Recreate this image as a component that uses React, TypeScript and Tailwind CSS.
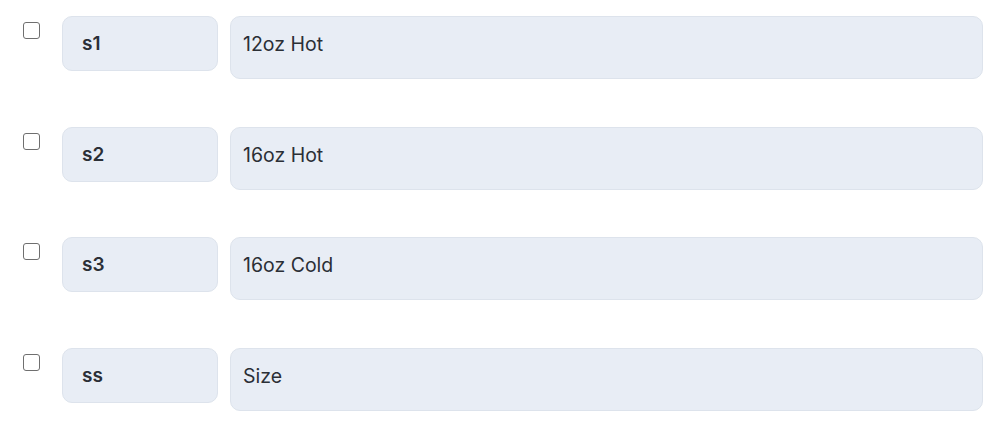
const rows = [
  { code: 's1', label: '12oz Hot' },
  { code: 's2', label: '16oz Hot' },
  { code: 's3', label: '16oz Cold' },
  { code: 'ss', label: 'Size' },
]

export default function App() {
  return (
    <div
      className="min-h-screen w-full bg-white pl-[23px] pr-[12px] pt-[16px] text-[#2b2f36]"
      style={{ fontFamily: 'Inter, "Noto Sans", sans-serif' }}
    >
      <div className="flex flex-col gap-[47.5px]">
        {rows.map((row) => (
          <div key={row.code} className="flex items-start">
            <input
              type="checkbox"
              className="mt-[6px] h-[17px] w-[17px] shrink-0 appearance-none rounded-[3px] border-[1.5px] border-[#6f6f6f] bg-white"
            />
            <div className="ml-[22px] h-[55px] w-[156px] shrink-0 rounded-[10px] border border-[#dde3ec] bg-[#e8edf5] pl-[19px] pt-[14px] text-[19px] font-semibold leading-[26px]">
              {row.code}
            </div>
            <div className="ml-[12px] h-[63px] flex-1 rounded-[10px] border border-[#dde3ec] bg-[#e8edf5] pl-[12px] pt-[14px] text-[19.5px] leading-[26px]">
              {row.label}
            </div>
          </div>
        ))}
      </div>
    </div>
  )
}
